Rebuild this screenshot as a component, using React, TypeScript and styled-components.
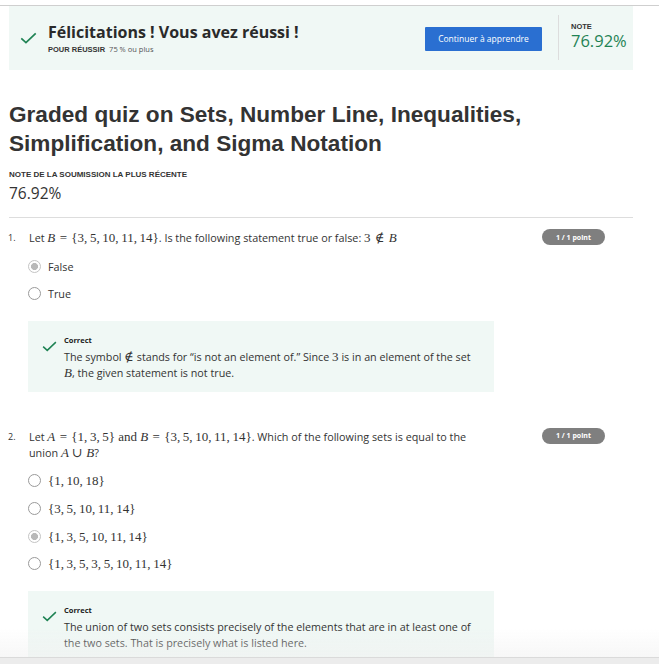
import React from 'react';
import { styled, createGlobalStyle } from 'styled-components';

const GlobalStyle = createGlobalStyle`
  body {
    margin: 0;
    background: #ffffff;
    font-family: 'Open Sans', 'Liberation Sans', sans-serif;
    color: #333333;
  }
`;

const Page = styled.div`
  margin-top: 5px;
  border-top: 1px solid #cfcfcf;
  padding: 0 0 40px 9px;
`;

const Content = styled.div`
  width: 624px;
`;

const Banner = styled.div`
  display: flex;
  align-items: center;
  height: 64px;
  background: #f0f8f5;
  padding: 0 8px 0 11px;
`;

const BannerText = styled.div`
  display: flex;
  flex-direction: column;
  margin-left: 11px;
  flex: 1;
`;

const BannerTitle = styled.div`
  font-size: 16px;
  font-weight: 700;
  color: #2a2a2a;
  line-height: 20px;
  margin-top: -1px;
`;

const Requirement = styled.div`
  font-size: 7.5px;
  color: #555;
  margin-top: 2px;
`;

const SmallCaps = styled.span`
  font-family: 'Liberation Sans', Arial, sans-serif;
  font-weight: 700;
  font-size: 7.5px;
  text-transform: uppercase;
  color: #333;
  margin-right: 4px;
`;

const PrimaryButton = styled.button`
  background: #2a6fd1;
  color: #ffffff;
  border: none;
  border-radius: 1px;
  font-family: 'Open Sans', sans-serif;
  font-size: 8.5px;
  height: 24px;
  width: 117px;
  padding: 0;
  margin-top: 1px;
`;

const Divider = styled.div`
  width: 1px;
  align-self: stretch;
  margin: 9px 12px 10px 16px;
  background: #dddddd;
`;

const GradeBlock = styled.div`
  display: flex;
  flex-direction: column;
  width: 54px;
  margin-top: -4px;
`;

const GradeLabel = styled.div`
  font-family: 'Liberation Sans', Arial, sans-serif;
  font-weight: 700;
  font-size: 7.5px;
  color: #333;
`;

const GradeValue = styled.div<{ $green?: boolean }>`
  font-size: ${({ $green }) => ($green ? '16.5px' : '15.5px')};
  color: ${({ $green }) => ($green ? '#1f8354' : '#333')};
  line-height: 20px;
`;

const Title = styled.h1`
  font-family: 'Liberation Sans', Arial, sans-serif;
  font-size: 22.6px;
  line-height: 29px;
  font-weight: 700;
  color: #333333;
  margin: 30px 0 12px;
`;

const LatestLabel = styled.div`
  font-family: 'Liberation Sans', Arial, sans-serif;
  font-weight: 700;
  font-size: 8px;
  color: #333;
  text-transform: uppercase;
  margin-bottom: 4px;
`;

const Separator = styled.hr`
  border: none;
  border-top: 1px solid #dddddd;
  margin: 14px 0 0;
`;

const Question = styled.div`
  margin-top: 12px;
  margin-left: -1px;

  & + & {
    margin-top: 37px;
  }
`;

const QuestionHead = styled.div`
  display: flex;
  align-items: flex-start;
`;

const Number = styled.div`
  width: 21px;
  font-size: 9px;
  line-height: 16px;
  color: #333;
`;

const Prompt = styled.div`
  width: 466px;
  font-size: 10.8px;
  line-height: 16px;
  color: #333;
`;

const Badge = styled.div`
  margin-left: 47px;
  margin-top: -1px;
  width: 63px;
  height: 16px;
  border-radius: 8px;
  background: #7f7f7f;
  color: #ffffff;
  font-size: 7px;
  font-weight: 700;
  display: flex;
  align-items: center;
  justify-content: center;
`;

const Options = styled.div`
  display: flex;
  flex-direction: column;
  gap: 13.7px;
  margin: 13px 0 0 20px;
`;

const Option = styled.label`
  display: flex;
  align-items: center;
  gap: 7px;
  font-size: 10.8px;
  color: #333;
  height: 14px;
`;

const Radio = styled.span<{ $checked?: boolean }>`
  box-sizing: border-box;
  width: 13px;
  height: 13px;
  border-radius: 50%;
  border: 1px solid ${({ $checked }) => ($checked ? '#c4c4c4' : '#9a9a9a')};
  background: ${({ $checked }) =>
    $checked ? 'radial-gradient(circle, #b9b9b9 0 3.2px, #ffffff 3.8px)' : '#ffffff'};
`;

const Feedback = styled.div`
  box-sizing: border-box;
  width: 466px;
  margin: 20px 0 0 20px;
  background: #f0f8f5;
  padding: 12px 16px 11px 14px;
  display: flex;
  gap: 7px;
`;

const FeedbackBody = styled.div`
  display: flex;
  flex-direction: column;
`;

const FeedbackTitle = styled.div`
  font-size: 7.5px;
  font-weight: 700;
  color: #222;
  line-height: 14px;
  margin-bottom: 2px;
`;

const FeedbackText = styled.div`
  font-size: 10.75px;
  line-height: 16px;
  color: #333;
`;

const Math = styled.span`
  font-family: 'Liberation Serif', 'DejaVu Serif', serif;
  font-size: 13px;
  line-height: 1;
`;

const Var = styled.i`
  font-family: 'Liberation Serif', 'DejaVu Serif', serif;
  font-style: italic;
`;

const BottomShade = styled.div`
  position: fixed;
  left: 0;
  right: 0;
  bottom: 0;
  height: 30px;
  background: linear-gradient(rgba(245, 245, 245, 0), rgba(240, 240, 240, 0.55));
  border-bottom: 6px solid #ececec;
  box-shadow: inset 0 -1px 0 #dadada;
  pointer-events: none;
`;

const FeedbackCheck = styled.div`
  margin-top: 2px;
`;

const Check = ({ size = 17 }: { size?: number }) => (
  <svg width={size} height={size * 0.7} viewBox="0 0 20 14" fill="none">
    <path d="M1.5 7.5 L7 12.5 L18.5 1.5" stroke="#1f8354" strokeWidth="2" />
  </svg>
);

const T = '\u2009';
const EQ = '\u2004=\u2004';
const NOTIN = '\u2004∉\u2004';

export default function App() {
  return (
    <>
      <GlobalStyle />
      <Page>
        <Content>
          <Banner>
            <Check />
            <BannerText>
              <BannerTitle>Félicitations ! Vous avez réussi !</BannerTitle>
              <Requirement>
                <SmallCaps>Pour réussir</SmallCaps>75 % ou plus
              </Requirement>
            </BannerText>
            <PrimaryButton>Continuer à apprendre</PrimaryButton>
            <Divider />
            <GradeBlock>
              <GradeLabel>NOTE</GradeLabel>
              <GradeValue $green>76.92%</GradeValue>
            </GradeBlock>
          </Banner>

          <Title>
            Graded quiz on Sets, Number Line, Inequalities, Simplification, and Sigma Notation
          </Title>
          <LatestLabel>Note de la soumission la plus récente</LatestLabel>
          <GradeValue>76.92%</GradeValue>
          <Separator />

          <Question>
            <QuestionHead>
              <Number>1.</Number>
              <Prompt>
                Let <Math><Var>B</Var>{EQ}{`{3,${T}5,${T}10,${T}11,${T}14}`}</Math>. Is the following
                statement true or false: <Math>3{NOTIN}<Var>B</Var></Math>
              </Prompt>
              <Badge>1 / 1 point</Badge>
            </QuestionHead>
            <Options>
              <Option>
                <Radio $checked />
                False
              </Option>
              <Option>
                <Radio />
                True
              </Option>
            </Options>
            <Feedback>
              <FeedbackCheck>
                <Check size={15} />
              </FeedbackCheck>
              <FeedbackBody>
                <FeedbackTitle>Correct</FeedbackTitle>
                <FeedbackText>
                  The symbol <Math>∉</Math> stands for “is not an element of.” Since{' '}
                  <Math>3</Math> is in an element of the set <Math><Var>B</Var></Math>, the
                  given statement is not true.
                </FeedbackText>
              </FeedbackBody>
            </Feedback>
          </Question>

          <Question>
            <QuestionHead>
              <Number>2.</Number>
              <Prompt>
                Let <Math><Var>A</Var>{EQ}{`{1,${T}3,${T}5}`} and <Var>B</Var>{EQ}{`{3,${T}5,${T}10,${T}11,${T}14}`}</Math>.
                Which of the following sets is equal to the union{' '}
                <Math><Var>A</Var>{'\u2005∪\u2005'}<Var>B</Var></Math>?
              </Prompt>
              <Badge>1 / 1 point</Badge>
            </QuestionHead>
            <Options>
              <Option>
                <Radio />
                <Math>{`{1,${T}10,${T}18}`}</Math>
              </Option>
              <Option>
                <Radio />
                <Math>{`{3,${T}5,${T}10,${T}11,${T}14}`}</Math>
              </Option>
              <Option>
                <Radio $checked />
                <Math>{`{1,${T}3,${T}5,${T}10,${T}11,${T}14}`}</Math>
              </Option>
              <Option>
                <Radio />
                <Math>{`{1,${T}3,${T}5,${T}3,${T}5,${T}10,${T}11,${T}14}`}</Math>
              </Option>
            </Options>
            <Feedback>
              <FeedbackCheck>
                <Check size={15} />
              </FeedbackCheck>
              <FeedbackBody>
                <FeedbackTitle>Correct</FeedbackTitle>
                <FeedbackText>
                  The union of two sets consists precisely of the elements that are in at least
                  one of the two sets. That is precisely what is listed here.
                </FeedbackText>
              </FeedbackBody>
            </Feedback>
          </Question>
        </Content>
      </Page>
      <BottomShade />
    </>
  );
}
